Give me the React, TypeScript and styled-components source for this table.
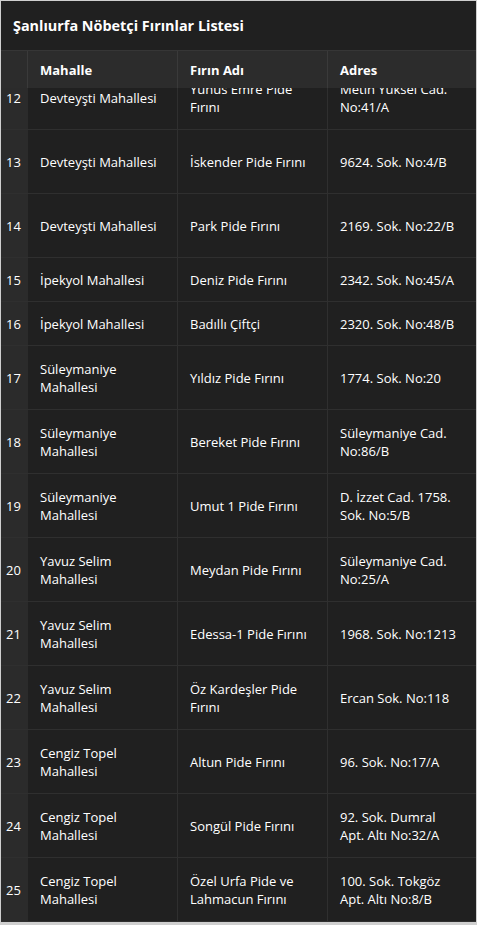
import React, { useLayoutEffect, useRef } from 'react'
import styled, { createGlobalStyle } from 'styled-components'

const GlobalStyle = createGlobalStyle`
  html, body {
    margin: 0;
    padding: 0;
    background: #d6d6d6;
  }
  body {
    font-family: "Open Sans", "Noto Sans", sans-serif;
    -webkit-font-smoothing: antialiased;
  }
`

const Frame = styled.div`
  box-sizing: border-box;
  width: 477px;
  height: 925px;
  border: 1px solid #cfcfcf;
  border-bottom-width: 3px;
  background: #202020;
  display: flex;
  flex-direction: column;
  overflow: hidden;
`

const TitleBar = styled.div`
  height: 49px;
  flex: none;
  display: flex;
  align-items: center;
  padding-left: 12px;
  color: #ffffff;
  font-size: 14.4px;
  font-weight: 700;
  border-bottom: 1px solid #363636;
`

const Grid = styled.div`
  display: grid;
  grid-template-columns: 27px 150px 150px 1fr;
`

const HeaderRow = styled(Grid)`
  height: 37px;
  flex: none;
  background: #2c2c2c;
`

const HeaderCell = styled.div<{ $last?: boolean }>`
  display: flex;
  align-items: center;
  padding-left: 12px;
  color: #ffffff;
  font-size: 13px;
  font-weight: 700;
  border-right: ${({ $last }) => ($last ? 'none' : '1px solid #3a3a3a')};
`

const Body = styled.div`
  flex: 1;
  overflow: hidden;
`

const Row = styled(Grid)<{ $h: number }>`
  height: ${({ $h }) => $h}px;
  border-bottom: 1px solid #2f2f2f;
  box-sizing: border-box;
`

const IndexCell = styled.div`
  display: flex;
  align-items: center;
  padding-left: 5px;
  background: #2b2b2b;
  color: #ffffff;
  font-size: 13px;
  border-right: 1px solid #2b2b2b;
`

const Cell = styled.div<{ $last?: boolean }>`
  display: flex;
  align-items: center;
  padding: 0 8px 0 12px;
  color: #ffffff;
  font-size: 13px;
  line-height: 18px;
  white-space: pre-line;
  border-right: ${({ $last }) => ($last ? 'none' : '1px solid #2f2f2f')};
`

type Bakery = {
  no: number
  mahalle: string
  firin: string
  adres: string
  h: number
}

const bakeries: Bakery[] = [
  { no: 12, mahalle: 'Devteyşti Mahallesi', firin: 'Yunus Emre Pide\nFırını', adres: 'Metin Yüksel Cad.\nNo:41/A', h: 64 },
  { no: 13, mahalle: 'Devteyşti Mahallesi', firin: 'İskender Pide Fırını', adres: '9624. Sok. No:4/B', h: 64 },
  { no: 14, mahalle: 'Devteyşti Mahallesi', firin: 'Park Pide Fırını', adres: '2169. Sok. No:22/B', h: 64 },
  { no: 15, mahalle: 'İpekyol Mahallesi', firin: 'Deniz Pide Fırını', adres: '2342. Sok. No:45/A', h: 44 },
  { no: 16, mahalle: 'İpekyol Mahallesi', firin: 'Badıllı Çiftçi', adres: '2320. Sok. No:48/B', h: 44 },
  { no: 17, mahalle: 'Süleymaniye\nMahallesi', firin: 'Yıldız Pide Fırını', adres: '1774. Sok. No:20', h: 64 },
  { no: 18, mahalle: 'Süleymaniye\nMahallesi', firin: 'Bereket Pide Fırını', adres: 'Süleymaniye Cad.\nNo:86/B', h: 64 },
  { no: 19, mahalle: 'Süleymaniye\nMahallesi', firin: 'Umut 1 Pide Fırını', adres: 'D. İzzet Cad. 1758.\nSok. No:5/B', h: 64 },
  { no: 20, mahalle: 'Yavuz Selim\nMahallesi', firin: 'Meydan Pide Fırını', adres: 'Süleymaniye Cad.\nNo:25/A', h: 64 },
  { no: 21, mahalle: 'Yavuz Selim\nMahallesi', firin: 'Edessa-1 Pide Fırını', adres: '1968. Sok. No:1213', h: 64 },
  { no: 22, mahalle: 'Yavuz Selim\nMahallesi', firin: 'Öz Kardeşler Pide\nFırını', adres: 'Ercan Sok. No:118', h: 64 },
  { no: 23, mahalle: 'Cengiz Topel\nMahallesi', firin: 'Altun Pide Fırını', adres: '96. Sok. No:17/A', h: 64 },
  { no: 24, mahalle: 'Cengiz Topel\nMahallesi', firin: 'Songül Pide Fırını', adres: '92. Sok. Dumral\nApt. Altı No:32/A', h: 64 },
  { no: 25, mahalle: 'Cengiz Topel\nMahallesi', firin: 'Özel Urfa Pide ve\nLahmacun Fırını', adres: '100. Sok. Tokgöz\nApt. Altı No:8/B', h: 64 },
]

const App = () => {
  const bodyRef = useRef<HTMLDivElement>(null)

  // list is scrolled a bit, row 12 sits partly under the header
  useLayoutEffect(() => {
    if (bodyRef.current) bodyRef.current.scrollTop = 22
  }, [])

  return (
    <>
      <GlobalStyle />
      <Frame>
        <TitleBar>Şanlıurfa Nöbetçi Fırınlar Listesi</TitleBar>
        <HeaderRow>
          <HeaderCell />
          <HeaderCell>Mahalle</HeaderCell>
          <HeaderCell>Fırın Adı</HeaderCell>
          <HeaderCell $last>Adres</HeaderCell>
        </HeaderRow>
        <Body ref={bodyRef}>
          {bakeries.map((b) => (
            <Row key={b.no} $h={b.h}>
              <IndexCell>{b.no}</IndexCell>
              <Cell>{b.mahalle}</Cell>
              <Cell>{b.firin}</Cell>
              <Cell $last>{b.adres}</Cell>
            </Row>
          ))}
        </Body>
      </Frame>
    </>
  )
}

export default App
